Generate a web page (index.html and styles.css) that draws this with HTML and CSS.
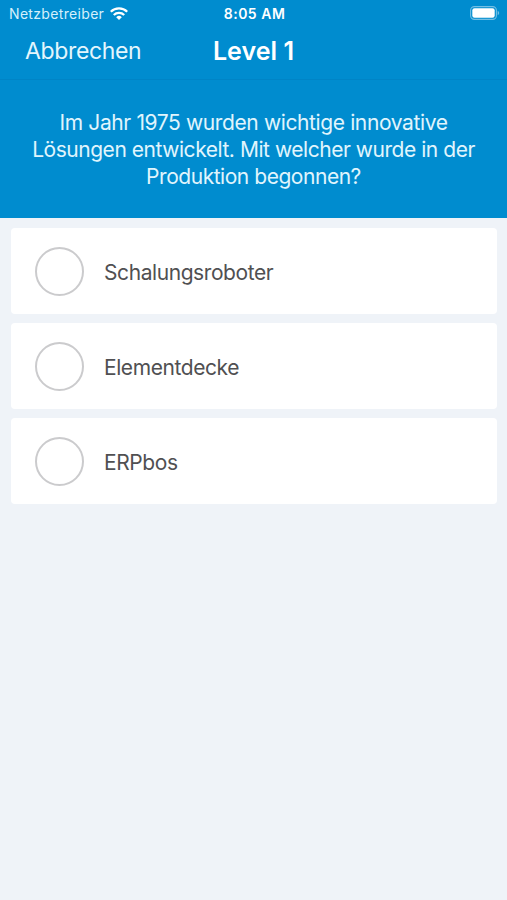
FILE: index.html
```html
<!DOCTYPE html>
<html lang="de">
<head>
<meta charset="utf-8">
<title>Level 1</title>
<link rel="stylesheet" href="styles.css">
</head>
<body>
<header class="top">
  <div class="status">
    <div class="carrier"><span class="carrier-name">Netzbetreiber</span>
      <svg class="wifi" viewBox="0 0 18 13" width="18" height="13"><g fill="none" stroke="#fff" stroke-width="2.3"><path d="M.8 4.8A11.7 11.7 0 0 1 17.2 4.8"/><path d="M3.8 8A7.4 7.4 0 0 1 14.2 8"/></g><path d="M9 13 6.2 10.2A4 4 0 0 1 11.8 10.2Z" fill="#fff"/></svg>
    </div>
    <span class="time">8:05 AM</span>
    <svg class="battery" viewBox="0 0 30 14" width="30" height="14"><rect x=".6" y=".6" width="25.8" height="12.8" rx="3.8" fill="none" stroke="#73bfe4" stroke-width="1.1"/><rect x="2.3" y="2.3" width="22.4" height="9.4" rx="2.2" fill="#fff"/><path d="M27.7 4.8Q29.2 5.5 29.2 7T27.7 9.2Z" fill="#73bfe4"/></svg>
  </div>
  <nav class="nav">
    <span class="cancel">Abbrechen</span>
    <h1 class="title">Level 1</h1>
  </nav>
</header>
<p class="question"><span class="line-first">Im Jahr 1975 wurden wichtige innovative</span><br>Lösungen entwickelt. Mit welcher wurde in der<br>Produktion begonnen?</p>
<main class="answers">
  <div class="answer"><span class="radio"></span><span class="label">Schalungsroboter</span></div>
  <div class="answer"><span class="radio"></span><span class="label">Elementdecke</span></div>
  <div class="answer"><span class="radio"></span><span class="label">ERPbos</span></div>
</main>
</body>
</html>
```
FILE: styles.css
```css
* { box-sizing: border-box; }
body {
  margin: 0;
  min-height: 900px;
  background: #eff3f8;
  font-family: Inter, "Liberation Sans", sans-serif;
}
.top { height: 80px; background: #008ccf; color: #fff; border-bottom: 1px solid #0084c6; }
.status {
  display: grid;
  grid-template-columns: 1fr auto 1fr;
  align-items: center;
  height: 26px;
  padding: 0 7px 0 9px;
}
.carrier { display: flex; align-items: center; gap: 6px; font-size: 14px; color: #d6f0fb; }
.carrier-name { letter-spacing: 0.33px; }
.wifi { display: block; }
.time { font-size: 14px; font-weight: 600; letter-spacing: 0.5px; }
.battery { justify-self: end; }
.nav {
  display: grid;
  grid-template-columns: 1fr auto 1fr;
  align-items: center;
  height: 49px;
  padding: 0 25px;
}
.cancel { font-size: 23px; letter-spacing: -0.35px; color: #e4f6fd; }
.title { margin: 0; font-size: 25px; font-weight: 600; letter-spacing: 0.05px; }
.question {
  margin: 0;
  height: 138px;
  padding-top: 29px;
  background: #008ccf;
  color: #e0f5fd;
  font-size: 21px;
  line-height: 27px;
  letter-spacing: -0.46px;
  text-align: center;
  white-space: nowrap;
}
.line-first { letter-spacing: -0.38px; }
.answers { display: flex; flex-direction: column; gap: 9.2px; padding: 10px 10px 0 11px; }
.answer {
  display: flex;
  align-items: center;
  gap: 20px;
  height: 86px;
  padding-left: 24px;
  background: #fff;
  border-radius: 4px;
}
.radio { width: 49px; height: 49px; border: 2px solid #cbcbcd; border-radius: 50%; }
.label { padding-top: 2px; color: #505052; font-size: 21px; letter-spacing: -0.42px; }
```
